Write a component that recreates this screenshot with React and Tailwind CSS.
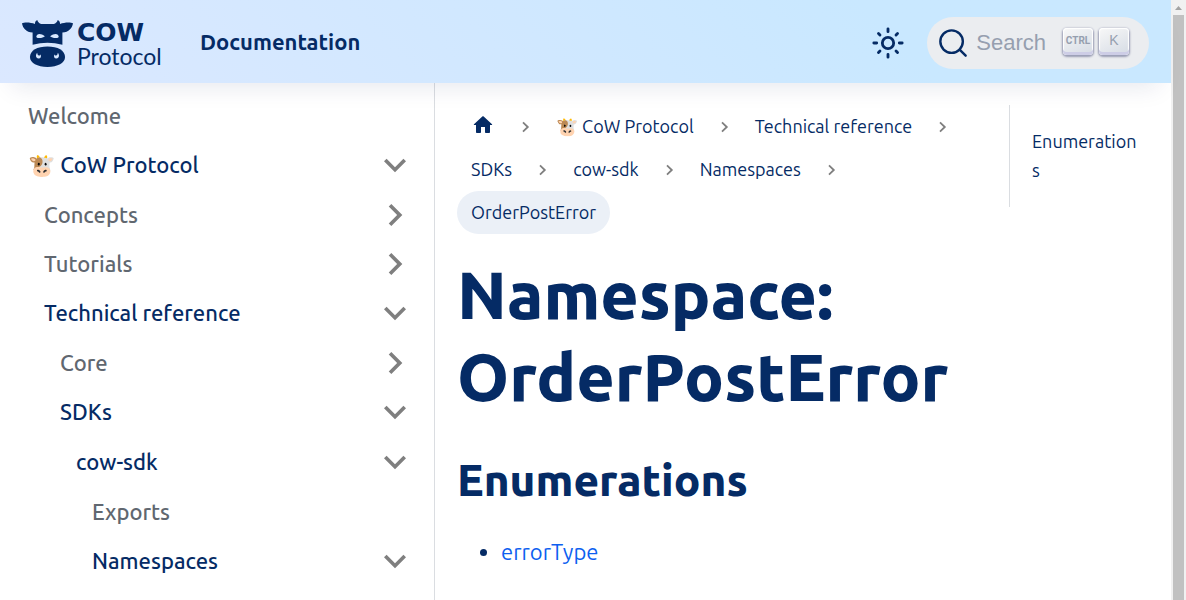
import React from "react";

const navigation = [
  { label: "Welcome" },
  {
    label: "🐮 CoW Protocol",
    active: true,
    items: [
      { label: "Concepts", collapsed: true },
      { label: "Tutorials", collapsed: true },
      {
        label: "Technical reference",
        active: true,
        items: [
          { label: "Core", collapsed: true },
          {
            label: "SDKs",
            active: true,
            items: [
              {
                label: "cow-sdk",
                active: true,
                items: [
                  { label: "Exports" },
                  { label: "Namespaces", active: true, items: [] },
                ],
              },
            ],
          },
        ],
      },
    ],
  },
];

const trail = ["🐮 CoW Protocol", "Technical reference", "SDKs", "cow-sdk", "Namespaces"];

function CowHead() {
  return (
    <svg viewBox="0 0 154 142" className="h-[47px] w-[51px] shrink-0" fill="#052b65" aria-hidden="true">
      <path d="M0 10C6 6 26 6 39 12C39 7 41 2 46 0C48 7 52 10 58 12H96C102 10 106 7 108 0C113 2 115 7 115 12C128 6 148 6 154 10C152 25 141 37 122 38V75Q77 62 32 75V38C13 37 2 25 0 10Z" />
      <path d="M24 112C24 92 46 80 77 80S130 92 130 112C130 130 108 142 77 142S24 130 24 112Z" />
      <g fill="#d8e8ff">
        <path d="M43 51C44 41 56 39 69 49C63 55 48 57 43 51Z" />
        <path d="M111 51C110 41 98 39 85 49C91 55 106 57 111 51Z" />
        <path d="M46 99C40 105 41 116 50 116C57 116 59 110 56 104L52 108C48 107 46 104 46 99Z" />
        <path d="M108 99C114 105 113 116 104 116C97 116 95 110 98 104L102 108C106 107 108 104 108 99Z" />
      </g>
    </svg>
  );
}

function SunIcon() {
  return (
    <svg viewBox="0 0 24 24" className="size-[34px]" fill="none" stroke="currentColor" strokeWidth="2" strokeLinecap="round" aria-hidden="true">
      <circle cx="12" cy="12" r="4" />
      <path d="M2 12h2M20 12h2M12 2v2M12 20v2M5.28 5.28l1.06 1.06M17.66 17.66l1.06 1.06M18.72 5.28l-1.06 1.06M6.34 17.66l-1.06 1.06" />
    </svg>
  );
}

function SearchIcon() {
  return (
    <svg viewBox="0 0 20 20" className="size-[30px]" fill="none" stroke="#052b65" strokeWidth="1.6" strokeLinecap="round" aria-hidden="true">
      <circle cx="9.06" cy="9.06" r="7.5" />
      <path d="M14.4 14.4l4.05 4.05" />
    </svg>
  );
}

function HomeIcon() {
  return (
    <svg viewBox="0 0 24 24" className="size-6" fill="currentColor" aria-hidden="true">
      <path d="M10 19v-5h4v5c0 .55.45 1 1 1h3c.55 0 1-.45 1-1v-7h1.7c.46 0 .68-.57.33-.87L12.67 3.6c-.38-.34-.96-.34-1.34 0l-8.36 7.53c-.34.3-.13.87.33.87H5v7c0 .55.45 1 1 1h3c.55 0 1-.45 1-1z" />
    </svg>
  );
}

function Caret({ open }) {
  return (
    <svg viewBox="0 0 24 24" className={open ? "size-11 rotate-180" : "size-11 rotate-90"} fill="#7f7f7f" aria-hidden="true">
      <path d="M7.41 15.41L12 10.83l4.59 4.58L18 14l-6-6-6 6z" />
    </svg>
  );
}

function Separator() {
  return (
    <svg viewBox="0 0 9 12" className="mx-3 h-3 w-[9px]" fill="none" stroke="#7f7f7f" strokeWidth="1.8" aria-hidden="true">
      <path d="M2 1.3L6.8 6L2 10.7" />
    </svg>
  );
}

function Key({ children, className }) {
  return (
    <kbd
      className={`flex h-[27px] w-[30px] items-center justify-center rounded-[4px] bg-[linear-gradient(-26.5deg,#d5dbe4,#f8f8f8)] pb-[3px] text-[#969faf] shadow-[inset_0_-3px_0_0_#cdcde6,inset_0_0_1px_1px_#fff,0_1px_2px_1px_rgba(30,35,90,0.4)] ${className}`}
    >
      {children}
    </kbd>
  );
}

function NavItem({ item }) {
  const open = Boolean(item.items);
  return (
    <li className="mt-[5px] first:mt-[6px]">
      <div className="flex h-11 items-center justify-between">
        <a href="#" className={`text-[22px] leading-7 font-medium ${item.active ? "text-[#052b65]" : "text-[#606770]"}`}>
          {item.label}
        </a>
        {(open || item.collapsed) && (
          <button type="button" aria-expanded={open} aria-label={`Toggle ${item.label}`} className="flex">
            <Caret open={open} />
          </button>
        )}
      </div>
      {open && item.items.length > 0 && (
        <ul className="pl-4">
          {item.items.map((child) => (
            <NavItem key={child.label} item={child} />
          ))}
        </ul>
      )}
    </li>
  );
}

export default function App() {
  return (
    <div className="flex min-h-screen bg-white font-['Ubuntu','Noto_Sans',sans-serif] text-[#052b65]">
      <div className="flex min-w-0 flex-1 flex-col">
        <header className="relative z-10 flex h-[83px] items-center justify-between bg-linear-45 from-[#dbe8ff] to-[#c9e8ff] to-75% px-[22px] pt-[2px] shadow-[0_16px_24px_-12px_rgba(8,30,90,0.1)]">
          <div className="flex items-center gap-7">
            <a href="#" className="flex items-center gap-1 pt-[2px]">
              <CowHead />
              <span className="flex w-[95px] flex-col">
                <span className="font-['DejaVu_Sans'] text-[25px] leading-[24px] font-bold">COW</span>
                <span className="font-['Lato'] text-[23px] leading-[22px]">Protocol</span>
              </span>
            </a>
            <a href="#" className="pb-[2px] text-[22px] leading-7 font-bold">
              Documentation
            </a>
          </div>
          <div className="flex items-center gap-[22px]">
            <button type="button" aria-label="Switch colour mode" className="flex">
              <SunIcon />
            </button>
            <button type="button" className="flex h-[52px] items-center rounded-full bg-[#ebedf0] pr-5 pl-[11px]">
              <SearchIcon />
              <span className="pr-[17px] pl-2 font-['Liberation_Sans'] text-[22px] text-[#969faf]">Search</span>
              <span className="flex gap-[6px] pb-[2px]">
                <Key className="font-['Roboto'] text-[10px] font-bold">CTRL</Key>
                <Key className="font-['Liberation_Sans'] text-[14px]">K</Key>
              </span>
            </button>
          </div>
        </header>

        <div className="flex flex-1">
          <nav aria-label="Docs sidebar" className="w-[435px] shrink-0 border-r border-[#dadde1] pt-[5px] pr-[17px] pl-7">
            <ul>
              {navigation.map((item) => (
                <NavItem key={item.label} item={item} />
              ))}
            </ul>
          </nav>

          <main className="flex min-w-0 flex-1 items-start pt-[22px]">
            <article className="w-3/4 px-[22px]">
              <nav aria-label="Breadcrumbs">
                <ol className="flex flex-wrap text-[18px] leading-[43px]">
                  <li className="flex items-center">
                    <a href="#" aria-label="Home page" className="px-[14px] pb-1">
                      <HomeIcon />
                    </a>
                    <Separator />
                  </li>
                  {trail.map((label) => (
                    <li key={label} className="flex items-center">
                      <a href="#" className="px-[14px]">{label}</a>
                      <Separator />
                    </li>
                  ))}
                  <li className="rounded-full bg-[#ebf0f7] px-[14px]">OrderPostError</li>
                </ol>
              </nav>
              <h1 className="mt-[19px] text-[66px] leading-[82px] font-extrabold">Namespace: OrderPostError</h1>
              <h2 className="mt-[35px] text-[44px] leading-[56px] font-extrabold">Enumerations</h2>
              <ul className="mt-[26px] list-disc pl-11 text-[22px] leading-9">
                <li>
                  <a href="#" className="text-[#0d5ff0]">errorType</a>
                </li>
              </ul>
            </article>
            <aside className="w-1/4 px-[22px]">
              <ul className="border-l border-[#dadde1] py-[22px] pr-[11px] pl-[22px] text-[18px] leading-[29px]">
                <li>
                  <a href="#" className="wrap-anywhere">Enumerations</a>
                </li>
              </ul>
            </aside>
          </main>
        </div>
      </div>

      <div className="flex w-[15px] shrink-0 flex-col items-center bg-[#f1f1f1]" aria-hidden="true">
        <svg viewBox="0 0 15 15" className="size-[15px]" fill="#a3a3a3">
          <path d="M4 10L7.5 6L11 10Z" />
        </svg>
        <div className="w-[11px] flex-1 bg-[#c1c1c1]" />
      </div>
    </div>
  );
}
